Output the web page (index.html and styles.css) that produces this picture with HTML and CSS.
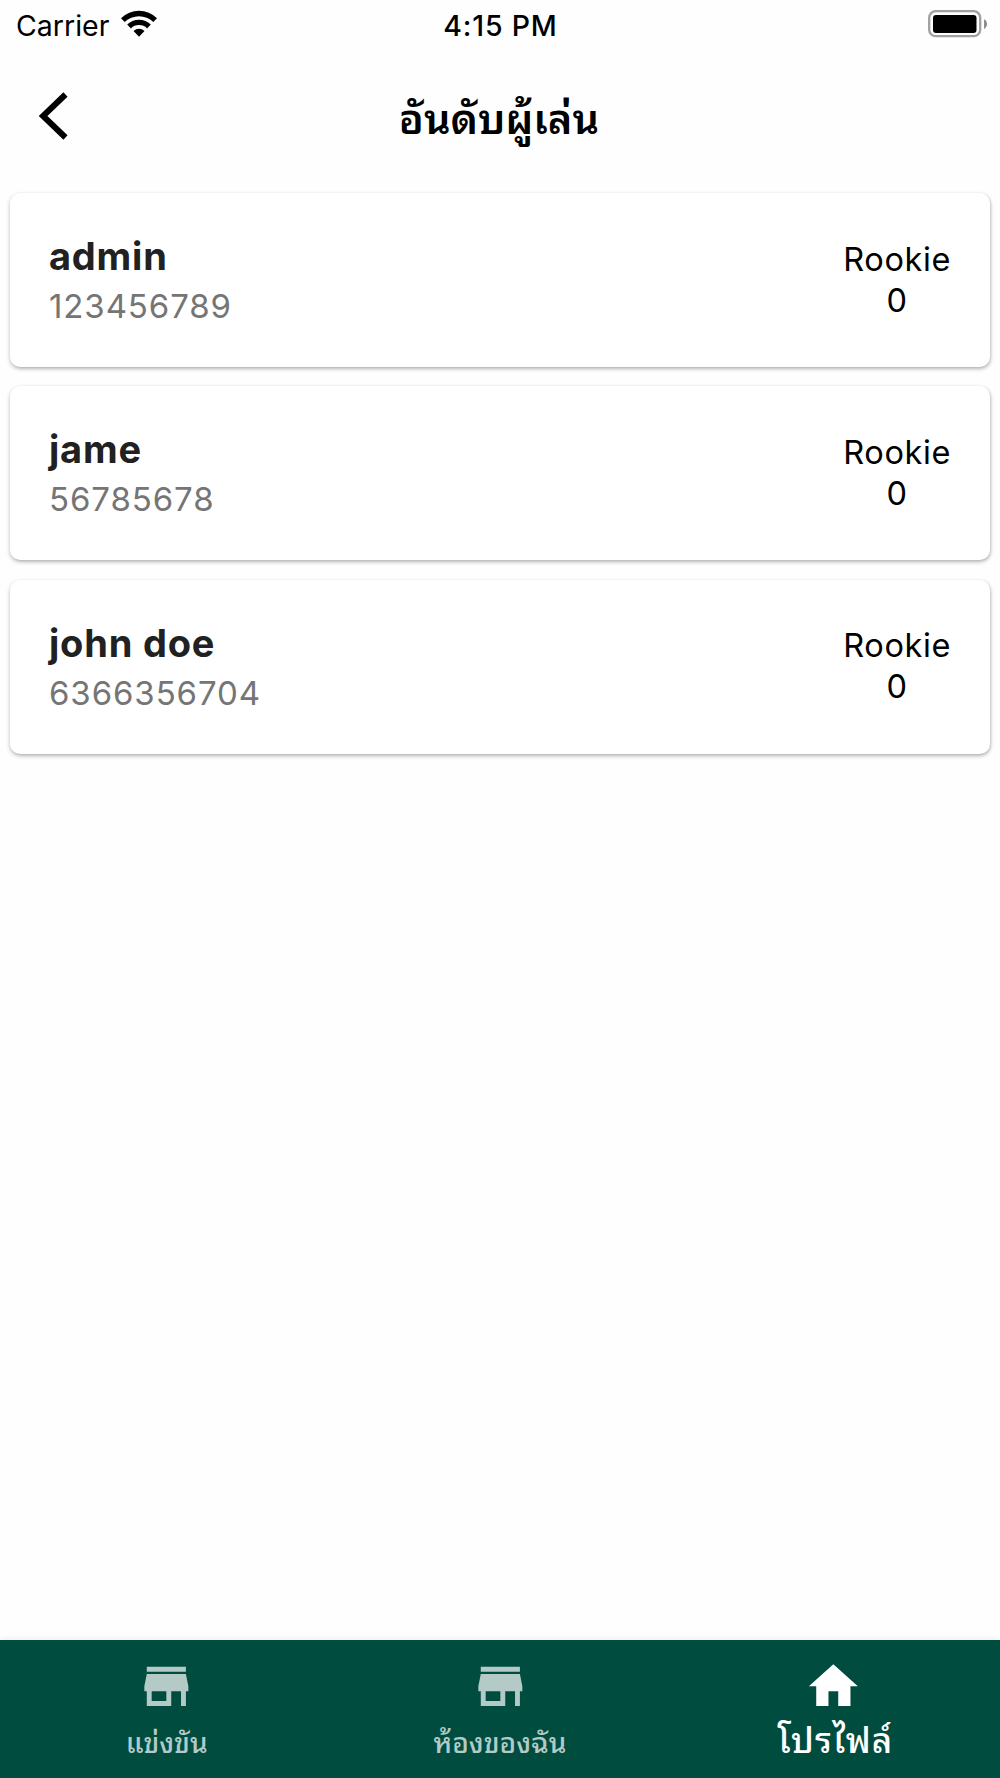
FILE: index.html
```html
<!DOCTYPE html>
<html lang="th">
<head>
<meta charset="utf-8">
<title>อันดับผู้เล่น</title>
<link rel="stylesheet" href="styles.css">
</head>
<body>
<div class="screen">
  <div class="status">
    <div class="status-left">
      <span class="carrier">Carrier</span>
      <svg class="wifi" viewBox="0 0 36 27" width="36" height="27">
        <path d="M0 8.200A25.500 25.500 0 0 1 36 8.200L32.300 12.100A20.200 20.200 0 0 0 3.700 12.100Z"/>
        <path d="M6.200 14.600A16.900 16.900 0 0 1 29.800 14.600L26.100 18.400A11.600 11.600 0 0 0 9.900 18.400Z"/>
        <path d="M12.500 21A8 8 0 0 1 23.500 21L18 26.700Z"/>
      </svg>
    </div>
    <span class="time">4:15 PM</span>
    <svg class="battery" viewBox="0 0 60 28" width="60" height="28">
      <rect x="1.200" y="1.200" width="51" height="25" rx="6.500" fill="none" stroke="#a0a0a0" stroke-width="2.300"/>
      <rect class="charge" x="5" y="5" width="43.500" height="18" rx="3"/>
      <path d="M56 9.300C60 11 60 17 56 19Z" fill="#8c8c8c"/>
    </svg>
  </div>
  <header class="header">
    <svg class="back" viewBox="0 0 30 48" width="30" height="48"><path d="M26.500 2.500L4 24L26.500 45.500" fill="none" stroke="#000" stroke-width="6"/></svg>
    <h1 class="title">อันดับผู้เล่น</h1>
  </header>
  <main class="list">
    <article class="card">
      <div class="player"><div class="name">admin</div><div class="code">123456789</div></div>
      <div class="rank"><div>Rookie</div><div>0</div></div>
    </article>
    <article class="card">
      <div class="player"><div class="name">jame</div><div class="code">56785678</div></div>
      <div class="rank"><div>Rookie</div><div>0</div></div>
    </article>
    <article class="card">
      <div class="player"><div class="name">john doe</div><div class="code">6366356704</div></div>
      <div class="rank"><div>Rookie</div><div>0</div></div>
    </article>
  </main>
  <nav class="tabs">
    <a class="tab">
      <svg class="icon" viewBox="0 0 24 24"><path d="M20 4H4v2h16V4zm1 10v-2l-1-5H4l-1 5v2h1v6h10v-6h4v6h2v-6h1zm-9 4H6v-4h6v4z"/></svg>
      <span class="label">แข่งขัน</span>
    </a>
    <a class="tab">
      <svg class="icon" viewBox="0 0 24 24"><path d="M20 4H4v2h16V4zm1 10v-2l-1-5H4l-1 5v2h1v6h10v-6h4v6h2v-6h1zm-9 4H6v-4h6v4z"/></svg>
      <span class="label">ห้องของฉัน</span>
    </a>
    <a class="tab active">
      <svg class="icon" viewBox="0 0 24 24"><path d="M10 20v-6h4v6h5v-8h3L12 3 2 12h3v8z"/></svg>
      <span class="label">โปรไฟล์</span>
    </a>
  </nav>
</div>
</body>
</html>
```
FILE: styles.css
```css
* { box-sizing: border-box; }

body {
  margin: 0;
  background: #fefefe;
  color: #000;
  font-family: Inter, "Noto Sans Thai Looped", "Noto Sans", sans-serif;
}

.screen {
  display: flex;
  flex-direction: column;
  height: 1778px;
  overflow: hidden;
}

.status {
  display: grid;
  grid-template-columns: 1fr auto 1fr;
  align-items: start;
  height: 53px;
  padding: 10px 12px 0 16px;
}

.status-left { display: flex; gap: 12px; }
.carrier, .time { font-size: 28.500px; line-height: 32px; white-space: nowrap; }
.time { font-weight: 500; letter-spacing: .8px; margin-right: 3px; }
.battery { justify-self: end; }

.header {
  display: grid;
  grid-template-columns: 120px 1fr 120px;
  height: 140px;
}

.back { margin: 39px 0 0 39px; }

.title {
  margin: 36px 2px 0 0;
  font-size: 41.500px;
  line-height: 60px;
  font-weight: 600;
  text-align: center;
}

.list {
  display: flex;
  flex: 1;
  flex-direction: column;
  gap: 19.400px;
  padding: 0 10px;
}

.card {
  display: flex;
  justify-content: space-between;
  height: 174px;
  padding: 38px 39px 0 39px;
  border-radius: 10px;
  background: #fff;
  box-shadow: 0 2px 4px rgba(0, 0, 0, .24), 1px 1px 3px rgba(0, 0, 0, .12);
}

.name {
  color: #212121;
  font-size: 38px;
  line-height: 50px;
  font-weight: 700;
  letter-spacing: .8px;
}

.code {
  color: #757575;
  font-size: 33px;
  line-height: 50px;
  letter-spacing: .9px;
}

.rank {
  padding-top: 7.500px;
  font-size: 32.500px;
  line-height: 41px;
  letter-spacing: .6px;
  text-align: center;
}

.tabs {
  display: grid;
  grid-template-columns: repeat(3, 1fr);
  height: 138px;
  background: #004d40;
  box-shadow: 0 -2px 6px rgba(0, 0, 0, .06);
}

.tab {
  display: flex;
  flex-direction: column;
  align-items: center;
  padding-top: 16.700px;
  color: #b3cac6;
}

.tab.active { color: #fff; }
.icon { width: 58.700px; height: 58.700px; fill: currentColor; }
.label { margin-top: 3px; font-size: 28px; line-height: 50px; font-weight: 500; }
.active .label { margin: 0 0 0 4px; font-size: 35px; letter-spacing: 1px; }
```
